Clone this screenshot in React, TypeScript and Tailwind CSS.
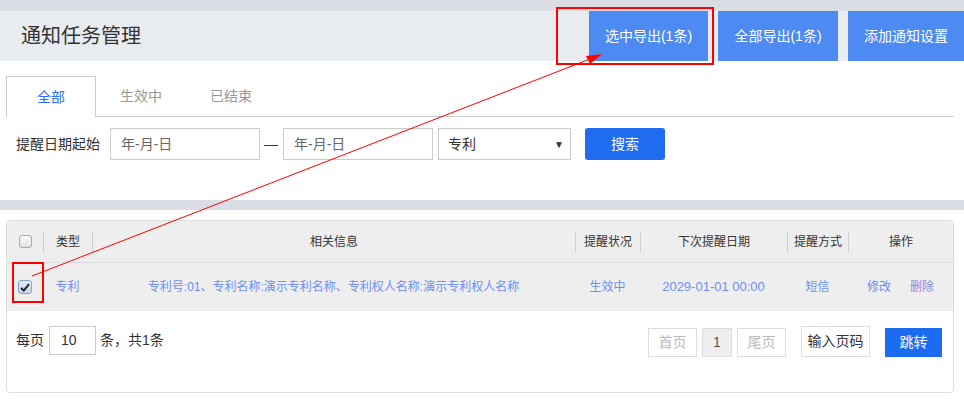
import { useState } from "react";

const font = "font-['Microsoft_YaHei','Liberation_Sans','Noto_Sans_CJK_SC',sans-serif]";

function Check({ checked }: { checked?: boolean }) {
  if (checked) {
    return (
      <span className="flex h-[14px] w-[14px] items-center justify-center rounded-[3px] border border-[#7fa4dc] bg-gradient-to-b from-[#e6ecf5] to-[#c9d6ea]">
        <svg width="10" height="9" viewBox="0 0 10 9">
          <path d="M1 5 L3.8 7.6 L9 1.2" fill="none" stroke="#222" strokeWidth="2" />
        </svg>
      </span>
    );
  }
  return (
    <span className="block h-[13px] w-[13px] rounded-[3px] border border-[#a9a9a9] bg-gradient-to-b from-[#fbfbfb] to-[#e3e3e3]" />
  );
}

const cols = [
  { w: "w-[36px]", label: "" },
  { w: "w-[49px]", label: "类型" },
  { w: "w-[483px]", label: "相关信息" },
  { w: "w-[65px]", label: "提醒状况" },
  { w: "w-[147px]", label: "下次提醒日期" },
  { w: "w-[61px]", label: "提醒方式" },
  { w: "flex-1", label: "操作" },
];

export default function App() {
  const [tab, setTab] = useState(0);
  const tabs = ["全部", "生效中", "已结束"];

  return (
    <div className={`relative h-[399px] w-[964px] overflow-hidden bg-white ${font}`}>
      <div className="h-[11px] bg-[#dadde4]" />

      {/* title bar with export buttons */}
      <div className="flex h-[50px] items-center justify-between bg-[#e8ebef]">
        <h1 className="pl-[21px] text-[20px] leading-none text-[#333]">通知任务管理</h1>
        <div className="flex h-full gap-[10px]">
          <button className="h-full w-[119px] bg-[#4d8af2] text-[14px] text-white">选中导出(1条)</button>
          <button className="h-full w-[120px] bg-[#4d8af2] text-[14px] text-white">全部导出(1条)</button>
          <button className="h-full w-[116px] bg-[#4d8af2] text-[14px] text-white">添加通知设置</button>
        </div>
      </div>

      {/* tabs + filter */}
      <div className="h-[139px] pt-[15px]">
        <div className="ml-[6px] mr-[10px] flex h-[41px] border-b border-[#cccccc]">
          {tabs.map((t, i) => (
            <button
              key={t}
              onClick={() => setTab(i)}
              className={`-mb-px w-[90px] text-[14px] ${
                tab === i
                  ? "border border-b-0 border-[#cccccc] bg-white text-[#2a6ef5]"
                  : "text-[#999]"
              }`}
            >
              {t}
            </button>
          ))}
        </div>

        <div className="mt-[11px] flex items-center pl-[16px] text-[14px] text-[#333]">
          <span className="w-[84px]">提醒日期起始</span>
          <div className="ml-[10px] flex h-[32px] w-[150px] items-center border border-[#ccc] pl-[10px] text-[#666]">年-月-日</div>
          <span className="ml-[4px] w-[14px] text-center">—</span>
          <div className="ml-[5px] flex h-[32px] w-[150px] items-center border border-[#ccc] pl-[10px] text-[#666]">年-月-日</div>
          <div className="ml-[5px] flex h-[32px] w-[133px] items-center justify-between border border-[#ccc] pl-[9px] pr-[6px]">
            <span>专利</span>
            <span className="text-[10px] text-[#333]">▼</span>
          </div>
          <button className="ml-[14px] h-[32px] w-[80px] rounded-[3px] bg-[#1f6cf0] text-white">搜索</button>
        </div>
      </div>

      <div className="h-[10px] bg-[#dadde4]" />

      {/* table card */}
      <div className="mx-[6px] mt-[10px] h-[173px] w-[948px] rounded-[4px] border border-[#dddddd] text-[12px]">
        <div className="flex h-[42px] rounded-t-[4px] border-b border-[#dcdcdc] bg-[#eeeeee] text-[#333]">
          {cols.map((c, i) => (
            <div key={i} className={`flex items-center ${c.w}`}>
              {i > 0 && <span className="h-[20px] w-px bg-[#cfcfcf]" />}
              <span className="flex flex-1 justify-center">{i === 0 ? <Check /> : c.label}</span>
            </div>
          ))}
        </div>
        <div className="flex h-[48px] items-center bg-[#eeeeee] text-[#6d8ef4]">
          <div className="flex w-[36px] justify-center"><Check checked /></div>
          <div className="w-[49px] text-center">专利</div>
          <div className="w-[483px] text-center">专利号:01、专利名称:演示专利名称、专利权人名称:演示专利权人名称</div>
          <div className="w-[65px] text-center">生效中</div>
          <div className="w-[147px] text-center text-[13px]">2029-01-01 00:00</div>
          <div className="w-[61px] text-center">短信</div>
          <div className="flex flex-1 justify-center gap-[19px]">
            <span>修改</span>
            <span className="text-[#8a86e8]">删除</span>
          </div>
        </div>

        <div className="flex items-start justify-between pl-[9px] pr-[11px] pt-[15px] text-[14px]">
          <div className="flex items-center text-[#333]">
            <span>每页</span>
            <div className="ml-[5px] flex h-[29px] w-[47px] items-center border border-[#ccc] pl-[11px]">10</div>
            <span className="ml-[4px]">条，共1条</span>
          </div>
          <div className="flex items-center">
            <span className="mt-px flex h-[29px] w-[49px] items-center justify-center border border-[#ddd] text-[#bbb]">首页</span>
            <span className="ml-[5px] mt-px flex h-[29px] w-[30px] items-center justify-center border border-[#ddd] bg-[#eee] text-[#555]">1</span>
            <span className="ml-[5px] mt-px flex h-[29px] w-[49px] items-center justify-center border border-[#ddd] text-[#bbb]">尾页</span>
            <span className="ml-[15px] flex h-[31px] w-[69px] items-center justify-center border border-[#ddd] text-[#333]">输入页码</span>
            <button className="ml-[15px] mt-px h-[29px] w-[57px] bg-[#1c6cf2] text-white">跳转</button>
          </div>
        </div>
      </div>

      {/* annotation overlay */}
      <div className="pointer-events-none absolute left-[556px] top-[7px] h-[58px] w-[158px] border-2 border-[#ff0000]" />
      <div className="pointer-events-none absolute left-[12px] top-[262px] h-[41px] w-[32px] border-2 border-[#ff0000]" />
      <svg className="pointer-events-none absolute left-0 top-0" width="964" height="399">
        <line x1="32" y1="276" x2="590" y2="59" stroke="#ff0000" strokeWidth="1" />
        <polygon points="602,54 586,56 590,64" fill="#ff0000" />
      </svg>
    </div>
  );
}
